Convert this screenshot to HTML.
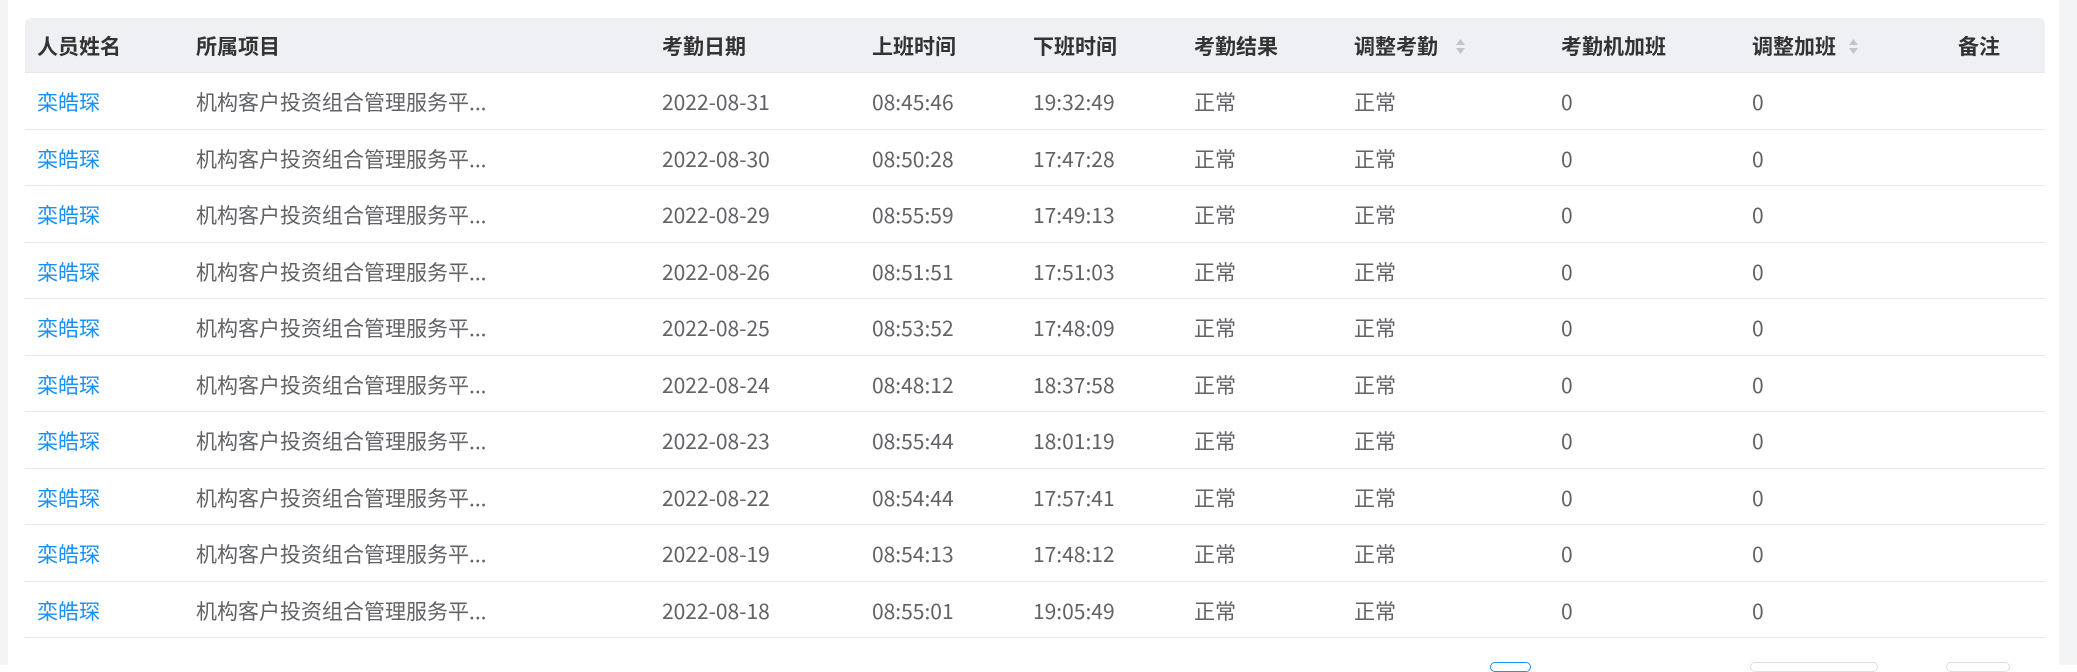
<!DOCTYPE html>
<html><head><meta charset="utf-8"><style>
*{margin:0;padding:0;box-sizing:border-box}
body{width:2077px;height:665px;background:#fff;position:relative;overflow:hidden;font-family:"Noto Sans CJK SC","Liberation Sans",sans-serif;font-size:21px;color:#606266}
.ls{position:absolute;left:0;top:0;width:8px;height:665px;background:#f3f4f6}
.rs{position:absolute;left:2059px;top:0;width:18px;height:665px;background:#f3f4f6}
.hd{position:absolute;left:25px;top:18px;width:2020px;height:55px;background:#eff0f4;border-radius:6px 6px 0 0;border-bottom:1px solid #e6e6e6}
.c{position:absolute;white-space:nowrap;line-height:28px}
.h{font-weight:bold;color:#333;top:14px}
.row{position:absolute;left:25px;width:2020px;height:56.5px;border-bottom:1px solid #e8e8e8}
.row .c{top:15px}
.a{color:#1890ff}
.sort{position:absolute;top:20px;width:11px;height:17px}
.pb{position:absolute;top:662px;height:10px;border:1px solid #dcdfe6;border-radius:5px}
</style></head><body>
<div class="ls"></div><div class="rs"></div>
<div class="hd">
<span class="c h" style="left:12px">人员姓名</span>
<span class="c h" style="left:171px">所属项目</span>
<span class="c h" style="left:637px">考勤日期</span>
<span class="c h" style="left:847px">上班时间</span>
<span class="c h" style="left:1008px">下班时间</span>
<span class="c h" style="left:1169px">考勤结果</span>
<span class="c h" style="left:1329px">调整考勤</span>
<svg class="sort" style="left:1430px" viewBox="0 0 11 17"><path d="M5.5 1L10 7H1z" fill="#c0c4cc"/><path d="M5.5 16L10 10H1z" fill="#c0c4cc"/></svg>
<span class="c h" style="left:1536px">考勤机加班</span>
<span class="c h" style="left:1727px">调整加班</span>
<svg class="sort" style="left:1823px" viewBox="0 0 11 17"><path d="M5.5 1L10 7H1z" fill="#c0c4cc"/><path d="M5.5 16L10 10H1z" fill="#c0c4cc"/></svg>
<span class="c h" style="left:1933px">备注</span>
</div>
<div class="pb" style="left:1490px;width:41px;border-color:#1890ff"></div>
<div class="pb" style="left:1750px;width:128px"></div>
<div class="pb" style="left:1946px;width:64px"></div>
<div class="row" style="top:73px"><span class="c a" style="left:12px">栾皓琛</span><span class="c" style="left:171px">机构客户投资组合管理服务平...</span><span class="c" style="left:637px">2022-08-31</span><span class="c" style="left:847px">08:45:46</span><span class="c" style="left:1008px">19:32:49</span><span class="c" style="left:1169px">正常</span><span class="c" style="left:1329px">正常</span><span class="c" style="left:1536px">0</span><span class="c" style="left:1727px">0</span></div>
<div class="row" style="top:129.5px"><span class="c a" style="left:12px">栾皓琛</span><span class="c" style="left:171px">机构客户投资组合管理服务平...</span><span class="c" style="left:637px">2022-08-30</span><span class="c" style="left:847px">08:50:28</span><span class="c" style="left:1008px">17:47:28</span><span class="c" style="left:1169px">正常</span><span class="c" style="left:1329px">正常</span><span class="c" style="left:1536px">0</span><span class="c" style="left:1727px">0</span></div>
<div class="row" style="top:186px"><span class="c a" style="left:12px">栾皓琛</span><span class="c" style="left:171px">机构客户投资组合管理服务平...</span><span class="c" style="left:637px">2022-08-29</span><span class="c" style="left:847px">08:55:59</span><span class="c" style="left:1008px">17:49:13</span><span class="c" style="left:1169px">正常</span><span class="c" style="left:1329px">正常</span><span class="c" style="left:1536px">0</span><span class="c" style="left:1727px">0</span></div>
<div class="row" style="top:242.5px"><span class="c a" style="left:12px">栾皓琛</span><span class="c" style="left:171px">机构客户投资组合管理服务平...</span><span class="c" style="left:637px">2022-08-26</span><span class="c" style="left:847px">08:51:51</span><span class="c" style="left:1008px">17:51:03</span><span class="c" style="left:1169px">正常</span><span class="c" style="left:1329px">正常</span><span class="c" style="left:1536px">0</span><span class="c" style="left:1727px">0</span></div>
<div class="row" style="top:299px"><span class="c a" style="left:12px">栾皓琛</span><span class="c" style="left:171px">机构客户投资组合管理服务平...</span><span class="c" style="left:637px">2022-08-25</span><span class="c" style="left:847px">08:53:52</span><span class="c" style="left:1008px">17:48:09</span><span class="c" style="left:1169px">正常</span><span class="c" style="left:1329px">正常</span><span class="c" style="left:1536px">0</span><span class="c" style="left:1727px">0</span></div>
<div class="row" style="top:355.5px"><span class="c a" style="left:12px">栾皓琛</span><span class="c" style="left:171px">机构客户投资组合管理服务平...</span><span class="c" style="left:637px">2022-08-24</span><span class="c" style="left:847px">08:48:12</span><span class="c" style="left:1008px">18:37:58</span><span class="c" style="left:1169px">正常</span><span class="c" style="left:1329px">正常</span><span class="c" style="left:1536px">0</span><span class="c" style="left:1727px">0</span></div>
<div class="row" style="top:412px"><span class="c a" style="left:12px">栾皓琛</span><span class="c" style="left:171px">机构客户投资组合管理服务平...</span><span class="c" style="left:637px">2022-08-23</span><span class="c" style="left:847px">08:55:44</span><span class="c" style="left:1008px">18:01:19</span><span class="c" style="left:1169px">正常</span><span class="c" style="left:1329px">正常</span><span class="c" style="left:1536px">0</span><span class="c" style="left:1727px">0</span></div>
<div class="row" style="top:468.5px"><span class="c a" style="left:12px">栾皓琛</span><span class="c" style="left:171px">机构客户投资组合管理服务平...</span><span class="c" style="left:637px">2022-08-22</span><span class="c" style="left:847px">08:54:44</span><span class="c" style="left:1008px">17:57:41</span><span class="c" style="left:1169px">正常</span><span class="c" style="left:1329px">正常</span><span class="c" style="left:1536px">0</span><span class="c" style="left:1727px">0</span></div>
<div class="row" style="top:525px"><span class="c a" style="left:12px">栾皓琛</span><span class="c" style="left:171px">机构客户投资组合管理服务平...</span><span class="c" style="left:637px">2022-08-19</span><span class="c" style="left:847px">08:54:13</span><span class="c" style="left:1008px">17:48:12</span><span class="c" style="left:1169px">正常</span><span class="c" style="left:1329px">正常</span><span class="c" style="left:1536px">0</span><span class="c" style="left:1727px">0</span></div>
<div class="row" style="top:581.5px"><span class="c a" style="left:12px">栾皓琛</span><span class="c" style="left:171px">机构客户投资组合管理服务平...</span><span class="c" style="left:637px">2022-08-18</span><span class="c" style="left:847px">08:55:01</span><span class="c" style="left:1008px">19:05:49</span><span class="c" style="left:1169px">正常</span><span class="c" style="left:1329px">正常</span><span class="c" style="left:1536px">0</span><span class="c" style="left:1727px">0</span></div>
</body></html>
